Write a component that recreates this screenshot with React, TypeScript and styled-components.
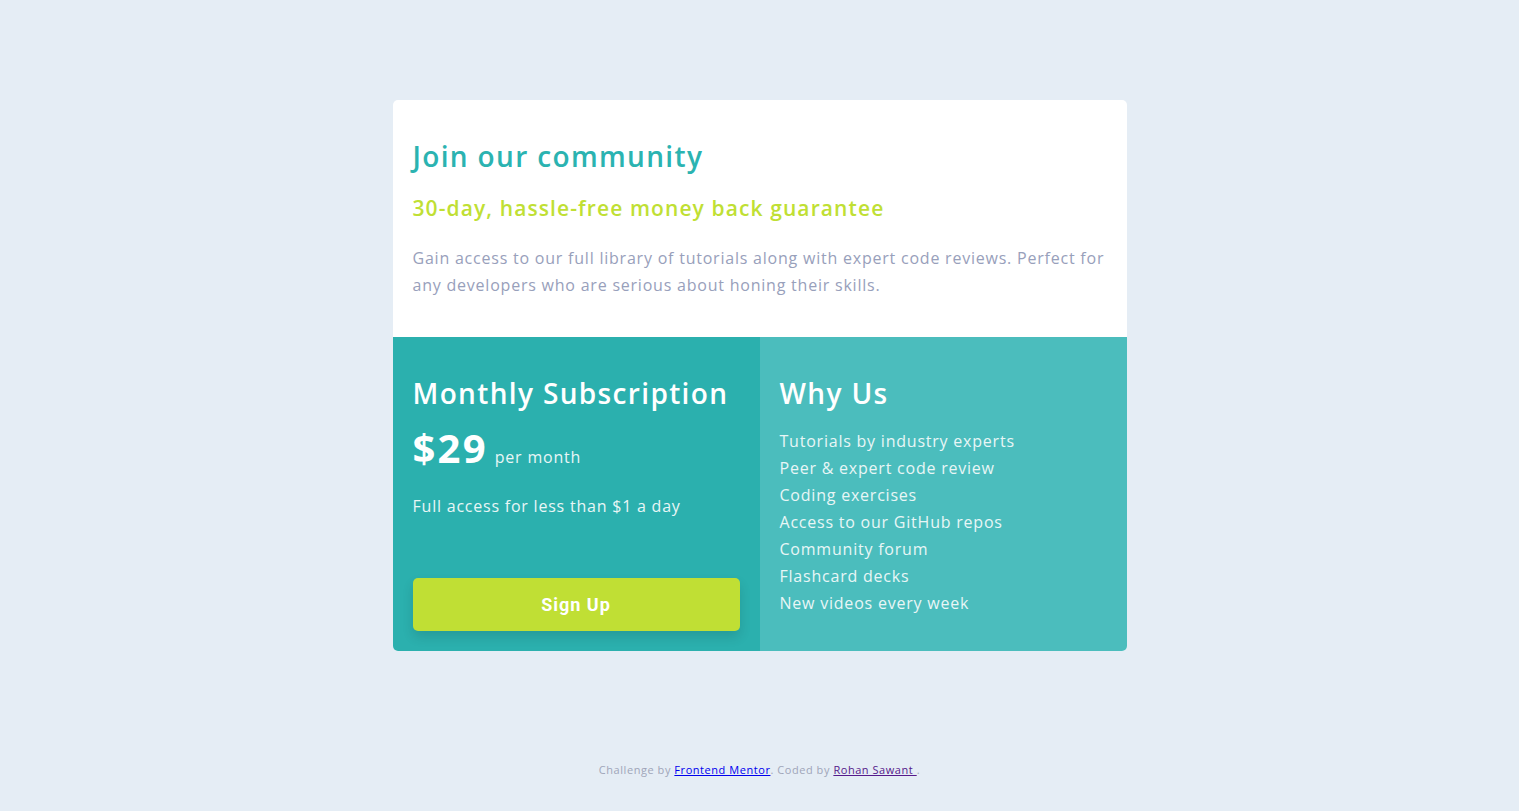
import React from "react";
import styled, { createGlobalStyle } from "styled-components";

const Global = createGlobalStyle`
  * { box-sizing: border-box; }
  html, body { margin: 0; padding: 0; }
  body {
    background: #e5edf5;
    font-family: "Open Sans", "Liberation Sans", sans-serif;
    font-size: 16px;
  }
`;

const Page = styled.div`
  min-height: 811px;
  display: flex;
  flex-direction: column;
  align-items: center;
  padding-top: 100px;
`;

const Card = styled.main`
  width: 734px;
  border-radius: 5px;
  overflow: hidden;
  background: #fff;
`;

const Top = styled.section`
  height: 237px;
  padding: 36px 20px 0;
`;

const Title = styled.h1`
  margin: 0;
  color: #2bb3b1;
  font-size: 28px;
  font-weight: 600;
  line-height: 40px;
  letter-spacing: 1.35px;
`;

const Guarantee = styled.h2`
  margin: 17px 0 0;
  color: #c0df34;
  font-size: 21px;
  font-weight: 600;
  line-height: 30px;
  letter-spacing: 1.1px;
`;

const Lead = styled.p`
  margin: 22px 0 0;
  color: #98a0bb;
  font-size: 16px;
  line-height: 27px;
  letter-spacing: 0.78px;
`;

const Bottom = styled.section`
  display: grid;
  grid-template-columns: 1fr 1fr;
  height: 314px;
`;

const Column = styled.div<{ $bg: string }>`
  background: ${(p) => p.$bg};
  color: #fff;
  padding: 36px 20px 20px;
  display: flex;
  flex-direction: column;
`;

const ColTitle = styled.h3`
  margin: 0;
  font-size: 28px;
  font-weight: 600;
  line-height: 40px;
  letter-spacing: 1.35px;
`;

const PriceRow = styled.div`
  display: flex;
  align-items: baseline;
  gap: 7px;
  margin-top: 9px;
`;

const Price = styled.span`
  font-size: 40px;
  font-weight: 700;
  line-height: 52px;
  letter-spacing: 2.2px;
`;

const Per = styled.span`
  font-size: 16px;
  color: #e8f6f6;
  letter-spacing: 0.8px;
`;

const Small = styled.p`
  margin: 19px 0 0;
  font-size: 16px;
  line-height: 27px;
  color: #e8f6f6;
  letter-spacing: 0.78px;
`;

const Button = styled.button`
  margin-top: auto;
  height: 53px;
  width: 100%;
  border: none;
  border-radius: 5px;
  background: #c0df34;
  color: #fff;
  font-family: "Roboto", "Liberation Sans", sans-serif;
  font-weight: 700;
  font-size: 18px;
  letter-spacing: 1px;
  box-shadow: 0 6px 12px rgba(0, 0, 0, 0.12);
  cursor: pointer;
`;

const List = styled.ul`
  list-style: none;
  margin: 15px 0 0;
  padding: 0;
`;

const Item = styled.li`
  font-size: 16px;
  line-height: 27px;
  color: #e8f6f6;
  letter-spacing: 0.78px;
`;

const Footer = styled.footer`
  margin-top: auto;
  padding-bottom: 34px;
  font-size: 11px;
  color: #a0a5b9;
  text-align: center;
  letter-spacing: 0.55px;
  a:first-of-type { color: #0000ee; }
  a:last-of-type { color: #551a8b; }
`;

const features = [
  "Tutorials by industry experts",
  "Peer & expert code review",
  "Coding exercises",
  "Access to our GitHub repos",
  "Community forum",
  "Flashcard decks",
  "New videos every week",
];

export default function App() {
  return (
    <>
      <Global />
      <Page>
        <Card>
          <Top>
            <Title>Join our community</Title>
            <Guarantee>30-day, hassle-free money back guarantee</Guarantee>
            <Lead>
              Gain access to our full library of tutorials along with expert code reviews. Perfect for
              any developers who are serious about honing their skills.
            </Lead>
          </Top>
          <Bottom>
            <Column $bg="#2bb0ae">
              <ColTitle>Monthly Subscription</ColTitle>
              <PriceRow>
                <Price>$29</Price>
                <Per>per month</Per>
              </PriceRow>
              <Small>Full access for less than $1 a day</Small>
              <Button>Sign Up</Button>
            </Column>
            <Column $bg="#4bbdbd">
              <ColTitle>Why Us</ColTitle>
              <List>
                {features.map((f) => (
                  <Item key={f}>{f}</Item>
                ))}
              </List>
            </Column>
          </Bottom>
        </Card>
        <Footer>
          Challenge by <a href="#">Frontend Mentor</a>. Coded by <a href="#">Rohan Sawant </a>.
        </Footer>
      </Page>
    </>
  );
}
